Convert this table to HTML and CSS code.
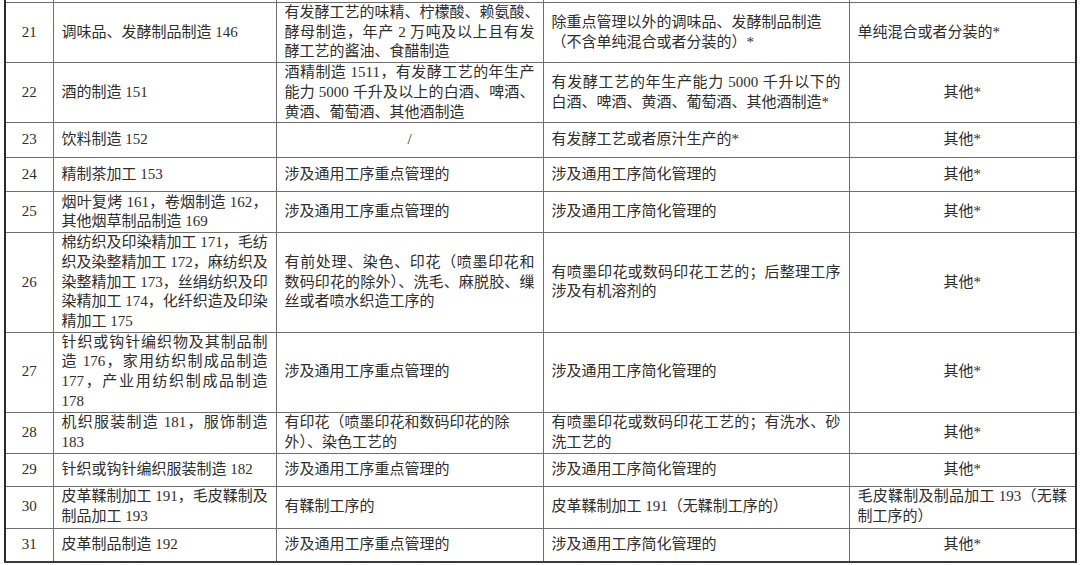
FILE: index.html
```html
<!DOCTYPE html>
<html lang="zh-CN">
<head>
<meta charset="utf-8">
<title>排污许可分类管理名录</title>
<link rel="stylesheet" href="styles.css">
</head>
<body>
<table class="grid">
  <colgroup>
    <col class="c-no"><col class="c-cat"><col class="c-key"><col class="c-simple"><col class="c-reg">
  </colgroup>
  <tbody>
    <tr class="cut"><td></td><td></td><td></td><td></td><td></td></tr>
    <tr>
      <td class="no">21</td>
      <td>调味品、发酵制品制造 146</td>
      <td><span class="ln fill">有发酵工艺的味精、柠檬酸、赖氨酸、</span><span class="ln fill">酵母制造，年产 2 万吨及以上且有发</span><span class="ln">酵工艺的酱油、食醋制造</span></td>
      <td><span class="ln">除重点管理以外的调味品、发酵制品制造</span><span class="ln">（不含单纯混合或者分装的）*</span></td>
      <td>单纯混合或者分装的*</td>
    </tr>
    <tr>
      <td class="no">22</td>
      <td>酒的制造 151</td>
      <td><span class="ln fill">酒精制造 1511，有发酵工艺的年生产</span><span class="ln fill">能力 5000 千升及以上的白酒、啤酒、</span><span class="ln">黄酒、葡萄酒、其他酒制造</span></td>
      <td><span class="ln fill">有发酵工艺的年生产能力 5000 千升以下的</span><span class="ln">白酒、啤酒、黄酒、葡萄酒、其他酒制造*</span></td>
      <td class="mid">其他*</td>
    </tr>
    <tr class="h1 tall">
      <td class="no">23</td>
      <td>饮料制造 152</td>
      <td class="mid">/</td>
      <td>有发酵工艺或者原汁生产的*</td>
      <td class="mid">其他*</td>
    </tr>
    <tr class="h1">
      <td class="no">24</td>
      <td>精制茶加工 153</td>
      <td>涉及通用工序重点管理的</td>
      <td>涉及通用工序简化管理的</td>
      <td class="mid">其他*</td>
    </tr>
    <tr class="h2">
      <td class="no">25</td>
      <td><span class="ln fill">烟叶复烤 161，卷烟制造 162，</span><span class="ln">其他烟草制品制造 169</span></td>
      <td>涉及通用工序重点管理的</td>
      <td>涉及通用工序简化管理的</td>
      <td class="mid">其他*</td>
    </tr>
    <tr>
      <td class="no">26</td>
      <td><span class="ln fill">棉纺织及印染精加工 171，毛纺</span><span class="ln fill">织及染整精加工 172，麻纺织及</span><span class="ln fill">染整精加工 173，丝绢纺织及印</span><span class="ln fill">染精加工 174，化纤织造及印染</span><span class="ln">精加工 175</span></td>
      <td><span class="ln fill">有前处理、染色、印花（喷墨印花和</span><span class="ln fill">数码印花的除外）、洗毛、麻脱胶、缫</span><span class="ln">丝或者喷水织造工序的</span></td>
      <td><span class="ln fill">有喷墨印花或数码印花工艺的；后整理工序</span><span class="ln">涉及有机溶剂的</span></td>
      <td class="mid">其他*</td>
    </tr>
    <tr>
      <td class="no">27</td>
      <td><span class="ln fill">针织或钩针编织物及其制品制</span><span class="ln fill">造 176，家用纺织制成品制造</span><span class="ln fill">177，产业用纺织制成品制造</span><span class="ln">178</span></td>
      <td>涉及通用工序重点管理的</td>
      <td>涉及通用工序简化管理的</td>
      <td class="mid">其他*</td>
    </tr>
    <tr class="h2">
      <td class="no">28</td>
      <td><span class="ln fill">机织服装制造 181，服饰制造</span><span class="ln">183</span></td>
      <td><span class="ln">有印花（喷墨印花和数码印花的除</span><span class="ln">外）、染色工艺的</span></td>
      <td><span class="ln fill">有喷墨印花或数码印花工艺的；有洗水、砂</span><span class="ln">洗工艺的</span></td>
      <td class="mid">其他*</td>
    </tr>
    <tr class="h1 short">
      <td class="no">29</td>
      <td>针织或钩针编织服装制造 182</td>
      <td>涉及通用工序重点管理的</td>
      <td>涉及通用工序简化管理的</td>
      <td class="mid">其他*</td>
    </tr>
    <tr class="h2 wide">
      <td class="no">30</td>
      <td><span class="ln fill">皮革鞣制加工 191，毛皮鞣制及</span><span class="ln">制品加工 193</span></td>
      <td>有鞣制工序的</td>
      <td>皮革鞣制加工 191（无鞣制工序的）</td>
      <td><span class="ln fill">毛皮鞣制及制品加工 193（无鞣</span><span class="ln">制工序的）</span></td>
    </tr>
    <tr class="h1 short last">
      <td class="no">31</td>
      <td>皮革制品制造 192</td>
      <td>涉及通用工序重点管理的</td>
      <td>涉及通用工序简化管理的</td>
      <td class="mid">其他*</td>
    </tr>
  </tbody>
</table>
</body>
</html>
```

FILE: styles.css
```css
html, body {
  margin: 0;
  padding: 0;
  background: #ffffff;
}

body {
  font-family: "Liberation Serif", "Noto Sans CJK SC", serif;
  font-size: 15px;
  color: #2e2e2e;
}

.grid {
  margin-left: 4px;
  width: 1073px;
  table-layout: fixed;
  border-collapse: collapse;
  border-left: 2px solid #2a2a2a;
  border-right: 2px solid #2a2a2a;
  border-bottom: 2px solid #3a3a3a;
}

.c-no { width: 48px; }
.c-cat { width: 223px; }
.c-key { width: 267px; }
.c-simple { width: 306px; }
.c-reg { width: 227px; }

.grid td {
  border: 1px solid #6f6f6f;
  padding: 0 8px;
  height: 33px;
  line-height: 19.7px;
  vertical-align: middle;
  text-align: left;
  white-space: nowrap;
  overflow: visible;
}

.grid td:first-child { border-left: 2px solid #2a2a2a; }
.grid td:last-child { border-right: 2px solid #2a2a2a; }

.grid .cut td {
  height: 2px;
  padding: 0;
  line-height: 0;
  font-size: 0;
  border-top: none;
}

.grid .h1 td { height: 33px; }
.grid .h1.tall td { height: 34px; }
.grid .h1.short td { height: 32px; }
.grid .h2 td { height: 40px; }
.grid .h2.wide td { height: 41px; }

.grid .last td { border-bottom: 2px solid #3a3a3a; }

.grid td.no,
.grid td.mid {
  text-align: center;
  padding: 0 4px;
}

.ln {
  display: block;
}

.ln.fill {
  text-align: justify;
  text-align-last: justify;
}
```
